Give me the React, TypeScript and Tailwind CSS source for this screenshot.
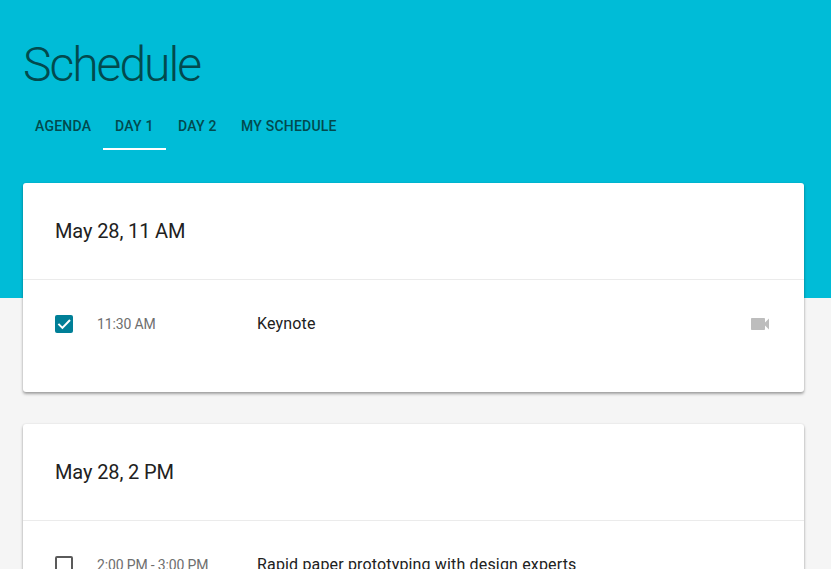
import React from "react";

type Session = { time: string; title: string; checked?: boolean; video?: boolean };

const tabs = [
  { label: "AGENDA", size: "w-20" },
  { label: "DAY 1", size: "w-[63px]" },
  { label: "DAY 2", size: "w-[63px]" },
  { label: "MY SCHEDULE", size: "w-[120px]" },
];

function Row({ time, title, checked, video }: Session) {
  return (
    <div className="flex h-[88px] items-center pr-8 pl-8">
      <svg viewBox="0 0 18 18" className="h-[18px] w-[18px] shrink-0">
        {checked ? (
          <>
            <rect width="18" height="18" rx="2" fill="#007f97" />
            <path d="M3.4 8.9l4 4 7.6-7.9" fill="none" stroke="#fff" strokeWidth="2" />
          </>
        ) : (
          <rect x="1" y="1" width="16" height="16" rx="1" fill="none" stroke="#5a5a5a" strokeWidth="2" />
        )}
      </svg>
      <span className="ml-6 w-40 text-sm tracking-[-0.15px] text-[#6e6e6e]">{time}</span>
      <span className="grow text-base tracking-[0.16px] text-[#212121]">{title}</span>
      {video && (
        <svg viewBox="0 0 24 24" className="h-6 w-6" fill="#bdbdbd">
          <path d="M17 10.5V7c0-.55-.45-1-1-1H4c-.55 0-1 .45-1 1v10c0 .55.45 1 1 1h12c.55 0 1-.45 1-1v-3.5l4 4v-11l-4 4z" />
        </svg>
      )}
    </div>
  );
}

function Card({ heading, sessions }: { heading: string; sessions: Session[] }) {
  return (
    <section className="h-[209px] rounded-[3px] bg-white shadow-[0_2px_3px_rgba(0,0,0,0.34),0_0_2px_rgba(0,0,0,0.1)]">
      <h2 className="flex h-[97px] items-center border-b border-[#ebebeb] px-8 text-xl tracking-[-0.12px] text-[#212121]">{heading}</h2>
      {sessions.map((s) => <Row key={s.title} {...s} />)}
    </section>
  );
}

export default function App() {
  return (
    <div className="h-[569px] overflow-hidden bg-[#f5f5f5] bg-[linear-gradient(#00bcd7_298px,#f5f5f5_298px)] font-['Roboto',sans-serif]">
      <header className="h-[183px] pl-[23px] pt-[37px]">
        <h1 className="h-[66px] text-[48px] leading-[56px] font-light tracking-[-2px] text-[#024a4e]">Schedule</h1>
        <nav className="flex h-[47px]">
          {tabs.map(({ label, size }, i) => (
            <a key={label} className={`flex items-center border-b-2 pl-3 text-sm font-medium whitespace-nowrap tracking-[0.22px] text-[#024a4e] ${size} ${i === 1 ? "border-white" : "border-transparent"}`}>
              {label}
            </a>
          ))}
        </nav>
      </header>
      <main className="flex flex-col gap-8 pr-[27px] pl-[23px]">
        <Card heading="May 28, 11 AM" sessions={[{ time: "11:30 AM", title: "Keynote", checked: true, video: true }]} />
        <Card heading="May 28, 2 PM" sessions={[{ time: "2:00 PM - 3:00 PM", title: "Rapid paper prototyping with design experts" }]} />
      </main>
    </div>
  );
}
